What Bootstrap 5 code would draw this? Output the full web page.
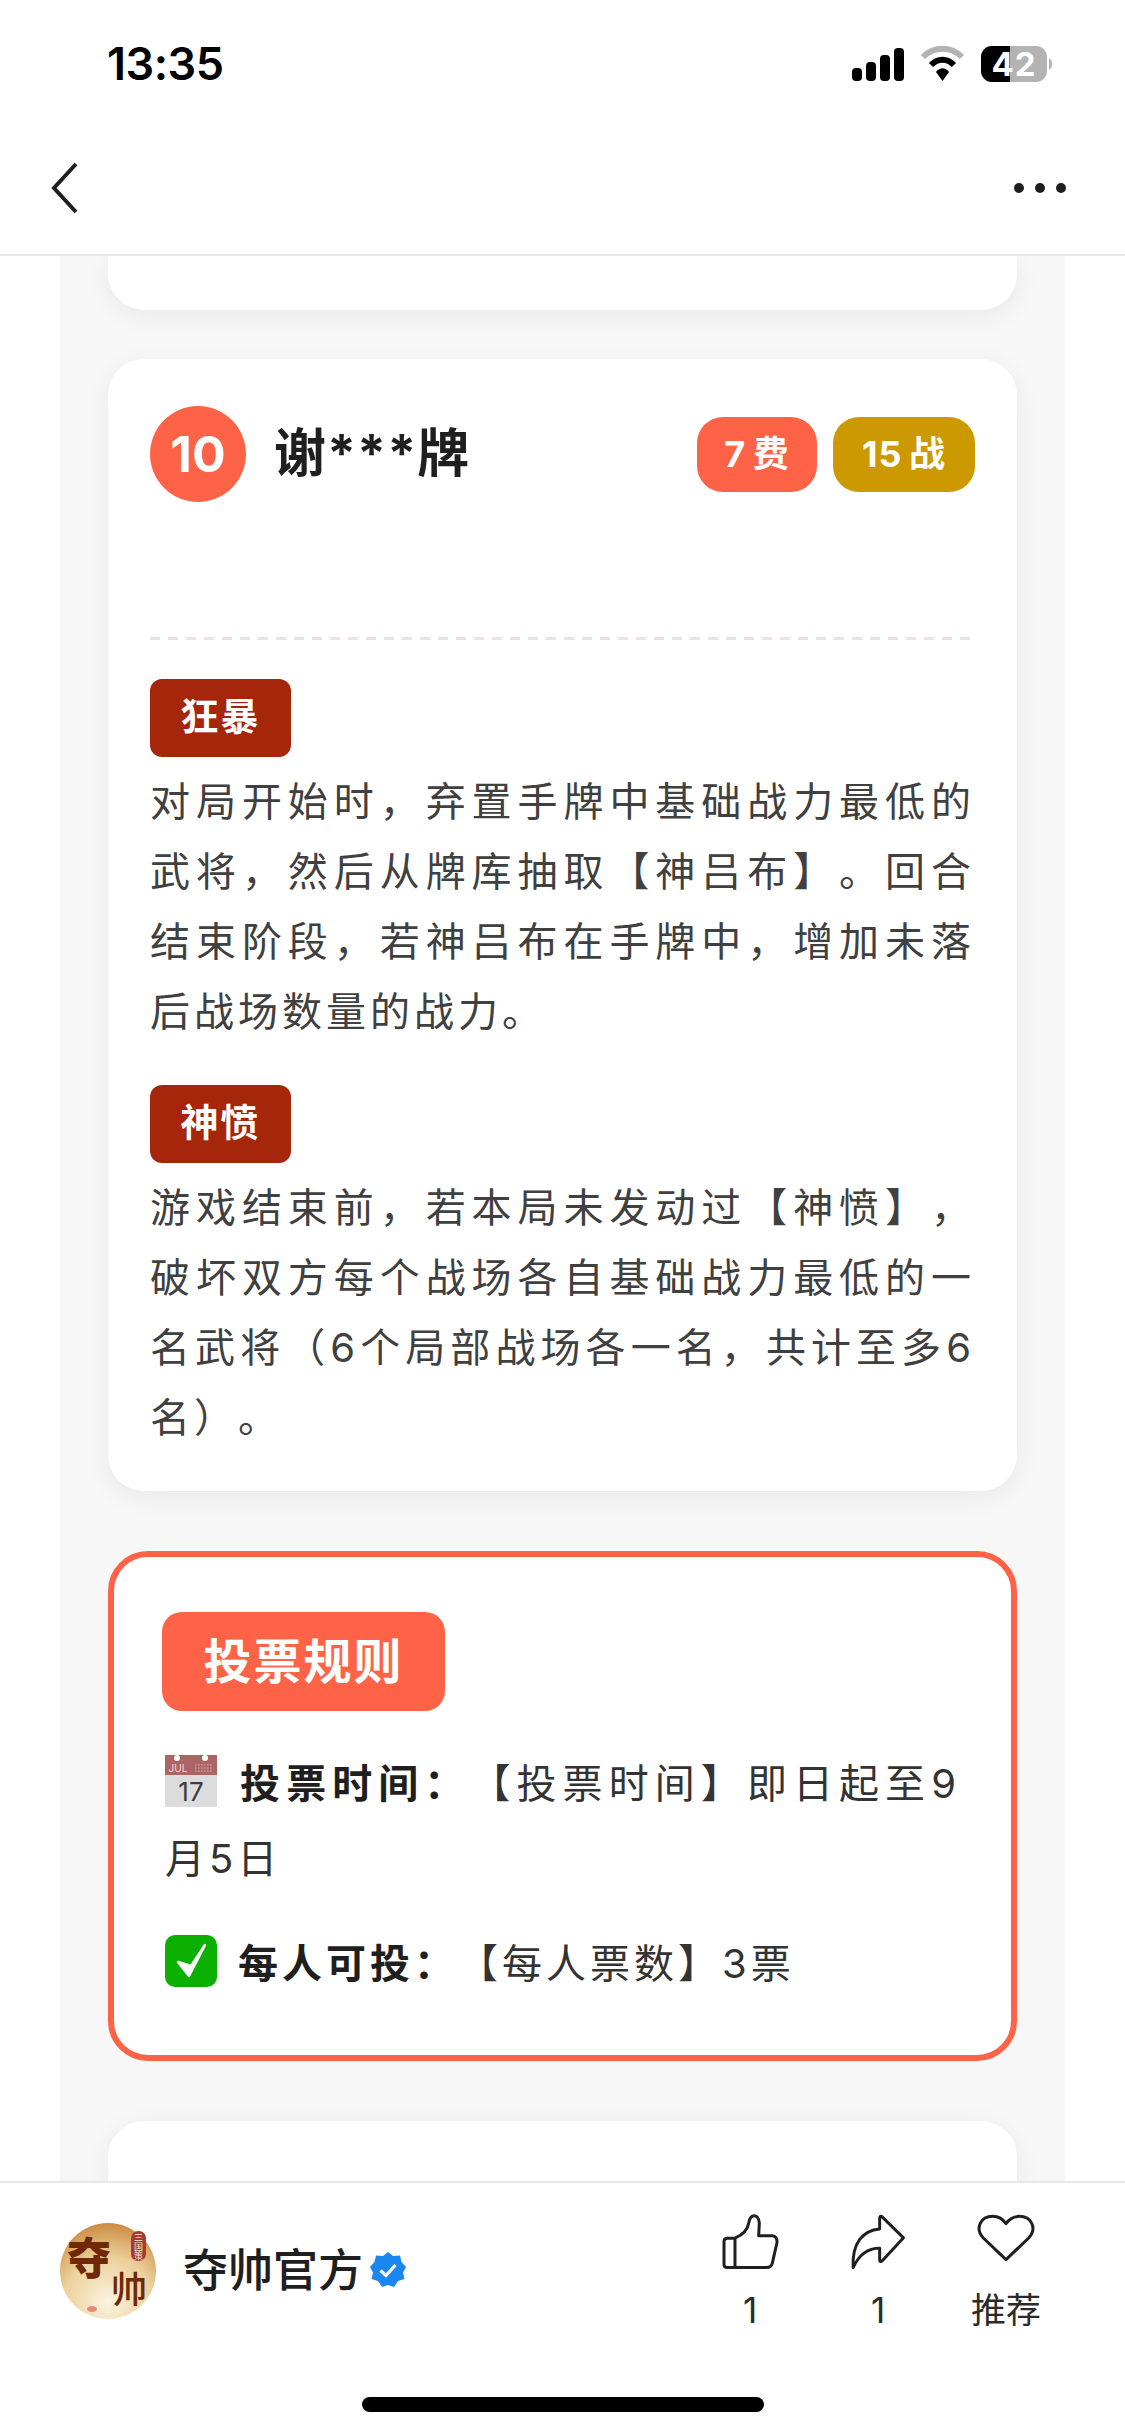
<!DOCTYPE html>
<html lang="zh-CN">
<head>
  <meta charset="UTF-8">
  <meta name="viewport" content="width=device-width, initial-scale=1.0">
  <title>投票规则</title>
  <link href="https://cdn.jsdelivr.net/npm/bootstrap@5.3.1/dist/css/bootstrap.min.css" rel="stylesheet">
  <style>
    html, body { height: 2436px; }
    body {
      font-family: Inter, "Noto Sans CJK SC", sans-serif;
      color: #1f1f1f;
      background: #fff;
      overflow: hidden;
      text-spacing-trim: space-all;
    }
    .top-bar { height: 256px; border-bottom: 2px solid #e8e8e8; flex: none; }
    .status-row { height: 127px; padding: 0 72px 0 107px; }
    .clock { font-size: 45px; font-weight: 600; letter-spacing: -.5px; color: #000; line-height: 1; }
    .nav-row { height: 122px; padding: 0 59px 0 50px; }
    .nav-dots { gap: 11px; }
    .nav-dot { width: 10px; height: 10px; border-radius: 50%; background: #1f1f1f; }
    .feed { flex: 1 1 0; min-height: 0; overflow: hidden; margin: 0 60px; padding: 0 48px; background: #f7f7f7; }
    .plain-card { background: #fff; border-radius: 36px; box-shadow: 0 6px 26px rgba(0, 0, 0, .06); }
    .card-stub { height: 54px; border-radius: 0 0 36px 36px; margin-bottom: 49px; }
    .hero-card { padding: 47px 42px 38px; margin-bottom: 60px; }
    .rank-dot { width: 96px; height: 96px; border-radius: 50%; background: #ff6347; color: #fff; font-size: 50px; font-weight: 700; }
    .hero-name { font-size: 52px; font-weight: 700; margin-left: 28px; letter-spacing: 1px; line-height: 1; }
    .stat-pill { height: 75px; border-radius: 26px; color: #fff; font-size: 36px; font-weight: 700; word-spacing: -3px; letter-spacing: 1px; }
    .pill-cost { background: #ff6347; width: 120px; }
    .pill-power { background: #cc9900; width: 142px; }
    .head-gap { height: 138px; margin-bottom: 39px; }
    .dash-line { height: 3px; width: 100%; background: repeating-linear-gradient(90deg, #efe0e0 0 10px, transparent 10px 18px); }
    .skill-tag { display: inline-flex; align-items: center; justify-content: center; width: 141px; height: 78px; padding-bottom: 3px; border-radius: 12px; background: #a5260a; color: #fff; font-size: 38px; font-weight: 700; letter-spacing: 2px; }
    .skill-text { font-size: 40px; letter-spacing: 4px; line-height: 70px; color: #404040; text-align: justify; margin: 10px 0 38px; }
    .skill-text:last-child { margin-bottom: 0; }
    .rule-box { background: #fff; border: 6px solid #ff6347; border-radius: 40px; padding: 55px 51px 54px 48px; margin-bottom: 60px; }
    .rule-title { display: inline-flex; align-items: center; justify-content: center; width: 283px; height: 99px; border-radius: 20px; background: #ff6347; color: #fff; font-size: 48px; font-weight: 700; letter-spacing: 2px; }
    .rule-line { font-size: 40px; line-height: 75px; letter-spacing: 4px; color: #333; text-align: justify; margin: 0 0 30px 3px; }
    .rule-line:last-child { margin-bottom: 0; }
    .rule-line b { color: #1f1f1f; font-weight: 700; }
    .rule-first { margin-top: 35px; }
    .rule-emoji { width: 52px; height: 52px; vertical-align: -9px; margin-right: 21px; letter-spacing: 0; }
    .bottom-bar { height: 255px; border-top: 2px solid #e8e8e8; flex: none; background: #fff; }
    .author-row { padding: 30px 55px 0 60px; }
    .author-pic { width: 96px; height: 96px; margin-top: 10px; flex: none; }
    .author-text { height: 96px; margin-top: 9px; }
    .author-name { font-size: 45px; font-weight: 500; margin-left: 27px; line-height: 1; }
    .v-mark { width: 36px; height: 36px; margin-left: 7px; }
    .seal-text { writing-mode: vertical-rl; }
    .act-col { width: 128px; }
    .act-icon { height: 68px; }
    .act-label { font-size: 35px; line-height: 1; margin-top: 12px; color: #2a2a2a; }
    .home-line { width: 402px; height: 15px; border-radius: 8px; background: #000; margin: auto auto 24px; }
  </style>
</head>
<body class="d-flex flex-column">

<header class="top-bar bg-white">
  <div class="status-row d-flex align-items-center justify-content-between">
    <span class="clock">13:35</span>
    <svg width="201" height="38" viewBox="852 44 201 38">
      <g fill="#000">
        <rect x="852" y="67" width="10" height="13" rx="4"/>
        <rect x="866" y="61" width="10" height="19" rx="4"/>
        <rect x="880" y="54" width="10" height="26" rx="4"/>
        <rect x="894" y="47" width="10" height="33" rx="4"/>
      </g>
      <path d="M923 56 C934 45 951 45 962 56" fill="none" stroke="#b3b3b3" stroke-width="6"/>
      <path d="M931 64 C938 57 947 57 954 64" fill="none" stroke="#000" stroke-width="6"/>
      <path d="M936 71 C940 66 945 66 949 71 L942.500 80 Z" fill="#000"/>
      <rect x="981" y="45" width="66" height="36" rx="11" fill="#b3b3b3"/>
      <path d="M992 45 H1010 V81 H992 A11 11 0 0 1 981 70 V56 A11 11 0 0 1 992 45 Z" fill="#000"/>
      <path d="M1049 57 C1053 59 1053 67 1049 69 Z" fill="#b3b3b3"/>
      <text x="1014" y="75" text-anchor="middle" font-family="Inter, sans-serif" font-size="33" font-weight="700" fill="#fff" letter-spacing="1">42</text>
    </svg>
  </div>
  <div class="nav-row d-flex align-items-center justify-content-between">
    <svg width="30" height="52" viewBox="0 0 30 52"><path d="M26 2 L4 26 L26 50" fill="none" stroke="#1f1f1f" stroke-width="4"/></svg>
    <div class="d-flex nav-dots">
      <span class="nav-dot"></span><span class="nav-dot"></span><span class="nav-dot"></span>
    </div>
  </div>
</header>

<main class="feed">
  <div class="plain-card card-stub"></div>

  <section class="plain-card hero-card">
    <div class="d-flex align-items-center">
      <div class="rank-dot d-flex align-items-center justify-content-center">10</div>
      <div class="hero-name flex-grow-1">谢***牌</div>
      <div class="d-flex gap-3">
        <span class="stat-pill pill-cost d-flex align-items-center justify-content-center">7 费</span>
        <span class="stat-pill pill-power d-flex align-items-center justify-content-center">15 战</span>
      </div>
    </div>
    <div class="head-gap d-flex align-items-end"><div class="dash-line"></div></div>

    <span class="skill-tag">狂暴</span>
    <p class="skill-text">对局开始时，弃置手牌中基础战力最低的武将，然后从牌库抽取【神吕布】。回合结束阶段，若神吕布在手牌中，增加未落后战场数量的战力。</p>
    <span class="skill-tag">神愤</span>
    <p class="skill-text">游戏结束前，若本局未发动过【神愤】，破坏双方每个战场各自基础战力最低的一名武将（6个局部战场各一名，共计至多6名）。</p>
  </section>

  <section class="rule-box">
    <div class="rule-title">投票规则</div>
    <p class="rule-line rule-first">
      <svg class="rule-emoji" viewBox="0 0 52 52">
        <rect width="52" height="52" fill="#dcdcdc"/>
        <rect width="52" height="20" fill="#ad6464"/>
        <circle cx="12" cy="3" r="3" fill="#fff"/><circle cx="40" cy="3" r="3" fill="#fff"/>
        <text x="13" y="17" text-anchor="middle" font-family="Inter, sans-serif" font-size="10" fill="#f3dede">JUL</text>
        <path d="M30 10h18M30 13h18M30 16h18" stroke="#d29a9a" stroke-width="1.500" stroke-dasharray="1.500 1.500"/>
        <text x="26" y="46" text-anchor="middle" font-family="Inter, sans-serif" font-size="26" fill="#3c3c3c">17</text>
      </svg><b>投票时间：</b>【投票时间】即日起至9月5日
    </p>
    <p class="rule-line">
      <svg class="rule-emoji" viewBox="0 0 52 52">
        <rect width="52" height="52" rx="10" fill="#0cb000"/>
        <path d="M13 27 L24 41 L40 10 L26 31 Z" fill="#fff" stroke="#fff" stroke-width="2.500" stroke-linejoin="round"/>
      </svg><b>每人可投：</b>【每人票数】3票
    </p>
  </section>

  <div class="plain-card" style="height: 120px"></div>
</main>

<footer class="bottom-bar d-flex flex-column">
  <div class="author-row d-flex justify-content-between">
    <div class="d-flex align-items-start">
      <svg class="author-pic" viewBox="0 0 96 96">
        <defs>
          <radialGradient id="avatarBg" cx="50%" cy="82%" r="85%">
            <stop offset="0" stop-color="#fbf3e0"/>
            <stop offset=".55" stop-color="#ecd09a"/>
            <stop offset="1" stop-color="#c9853a"/>
          </radialGradient>
        </defs>
        <circle cx="48" cy="48" r="48" fill="url(#avatarBg)"/>
        <text x="29" y="52" text-anchor="middle" font-family="'Noto Sans CJK SC', sans-serif" font-size="44" font-weight="900" fill="#6f2808">夺</text>
        <text x="69" y="80" text-anchor="middle" font-family="'Noto Sans CJK SC', sans-serif" font-size="36" font-weight="500" fill="#6f2808">帅</text>
        <rect x="71" y="8" width="15" height="30" rx="7" fill="#a83a32"/>
        <text class="seal-text" x="78.500" y="10" font-family="'Noto Sans CJK SC', sans-serif" font-size="9" fill="#f7e6d0">三国策</text>
        <ellipse cx="32" cy="86" rx="5" ry="3" fill="#e58a7a"/>
      </svg>
      <div class="d-flex align-items-center author-text">
        <span class="author-name">夺帅官方</span>
        <svg class="v-mark" viewBox="0 0 36 36">
          <path d="M18 0 L23 4 L30 3.500 L31.500 10 L36 15 L33 20.500 L34.500 27 L28 29 L24 35 L18 33 L12 35 L8 29 L1.500 27 L3 20.500 L0 15 L4.500 10 L6 3.500 L13 4 Z" fill="#1a86f0"/>
          <path d="M10.500 18.500 L16 23.500 L25.500 13" fill="none" stroke="#fff" stroke-width="3.200"/>
        </svg>
      </div>
    </div>
    <div class="d-flex">
      <div class="act-col text-center">
        <div class="act-icon">
          <svg width="60" height="57" viewBox="60 30 180 170"><path d="M105 105 H82 Q72 105 72 115 V183 Q72 193 82 193 H200 Q214 193 217 180 L231 118 Q232 98 215 98 H176 L178 60 Q176 38 162 38 Q150 38 146 60 Q142 88 105 105 Z M105 105 V193" fill="none" stroke="#1f1f1f" stroke-width="9" stroke-linejoin="round"/></svg>
        </div>
        <div class="act-label">1</div>
      </div>
      <div class="act-col text-center">
        <div class="act-icon">
          <svg width="60" height="58" viewBox="445 40 180 175"><path d="M612 115 L546 50 Q540 48 540 56 V88 C490 92 456 130 460 205 C478 165 505 146 540 146 V180 Q540 190 548 184 Z" fill="none" stroke="#1f1f1f" stroke-width="9" stroke-linejoin="round"/></svg>
        </div>
        <div class="act-label">1</div>
      </div>
      <div class="act-col text-center">
        <div class="act-icon">
          <svg width="60" height="50" viewBox="830 50 180 150"><path d="M920 190 L852 125 C825 95 845 60 880 60 C900 60 912 70 920 82 C928 70 940 60 960 60 C995 60 1015 95 988 125 Z" fill="none" stroke="#1f1f1f" stroke-width="9" stroke-linejoin="round"/></svg>
        </div>
        <div class="act-label">推荐</div>
      </div>
    </div>
  </div>
  <div class="home-line"></div>
</footer>

</body>
</html>
